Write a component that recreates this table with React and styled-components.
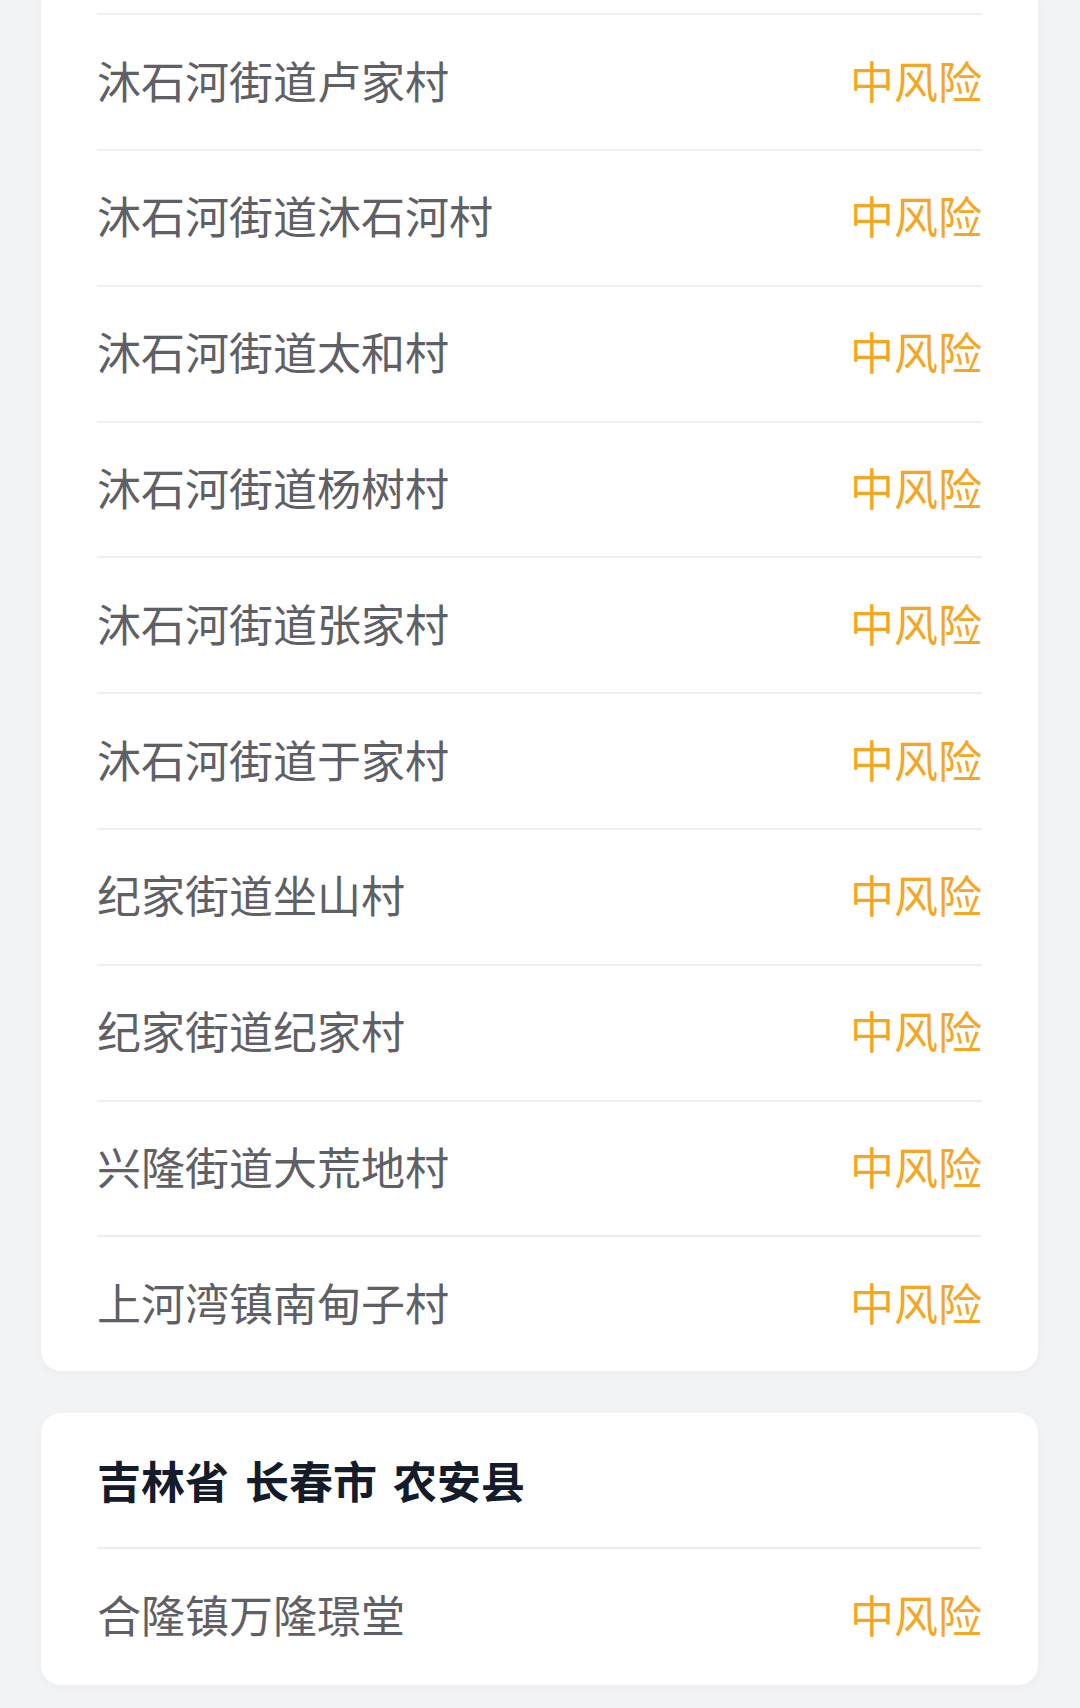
import React from "react";
import styled, { createGlobalStyle } from "styled-components";

const GlobalStyle = createGlobalStyle`
  html, body {
    margin: 0;
    padding: 0;
    background: #f2f3f5;
  }
  body {
    font-family: "Noto Sans CJK SC", "Noto Sans", sans-serif;
    -webkit-font-smoothing: antialiased;
  }
`;

const Page = styled.div`
  display: flex;
  flex-direction: column;
  gap: 41.6px;
  padding: 0 42px 23px 41px;
  width: 1080px;
  box-sizing: border-box;
  overflow: hidden;
  height: 1708px;
`;

const Card = styled.section`
  background: #ffffff;
  border-radius: 20px;
  padding: ${(p) => (p.$continued ? "33.3px 56px 0" : "0 56px")};
  margin-top: ${(p) => (p.$continued ? "-20px" : "0")};
  box-shadow: 0 2px 10px rgba(30, 40, 60, 0.035);
`;

const Header = styled.h2`
  margin: 0;
  height: 134.4px;
  display: flex;
  align-items: center;
  font-size: 44px;
  font-weight: 700;
  color: #141c2b;
  word-spacing: 6px;
  white-space: pre;
`;

const Row = styled.div`
  box-sizing: border-box;
  height: ${(p) => p.$h || 135.8}px;
  border-top: 2px solid #eeeff1;
  display: flex;
  align-items: center;
  justify-content: space-between;
  font-size: 44px;
  padding-bottom: 5px;
`;

const Place = styled.span`
  color: #5f6066;
`;

const Risk = styled.span`
  color: #f5a623;
`;

const firstList = [
  "沐石河街道卢家村",
  "沐石河街道沐石河村",
  "沐石河街道太和村",
  "沐石河街道杨树村",
  "沐石河街道张家村",
  "沐石河街道于家村",
  "纪家街道坐山村",
  "纪家街道纪家村",
  "兴隆街道大荒地村",
  "上河湾镇南甸子村",
];

export default function App() {
  return (
    <>
      <GlobalStyle />
      <Page>
        <Card $continued>
          {firstList.map((name) => (
            <Row key={name}>
              <Place>{name}</Place>
              <Risk>中风险</Risk>
            </Row>
          ))}
        </Card>
        <Card>
          <Header>{"吉林省 长春市 农安县"}</Header>
          <Row $h={137.3}>
            <Place>合隆镇万隆璟堂</Place>
            <Risk>中风险</Risk>
          </Row>
        </Card>
      </Page>
    </>
  );
}
